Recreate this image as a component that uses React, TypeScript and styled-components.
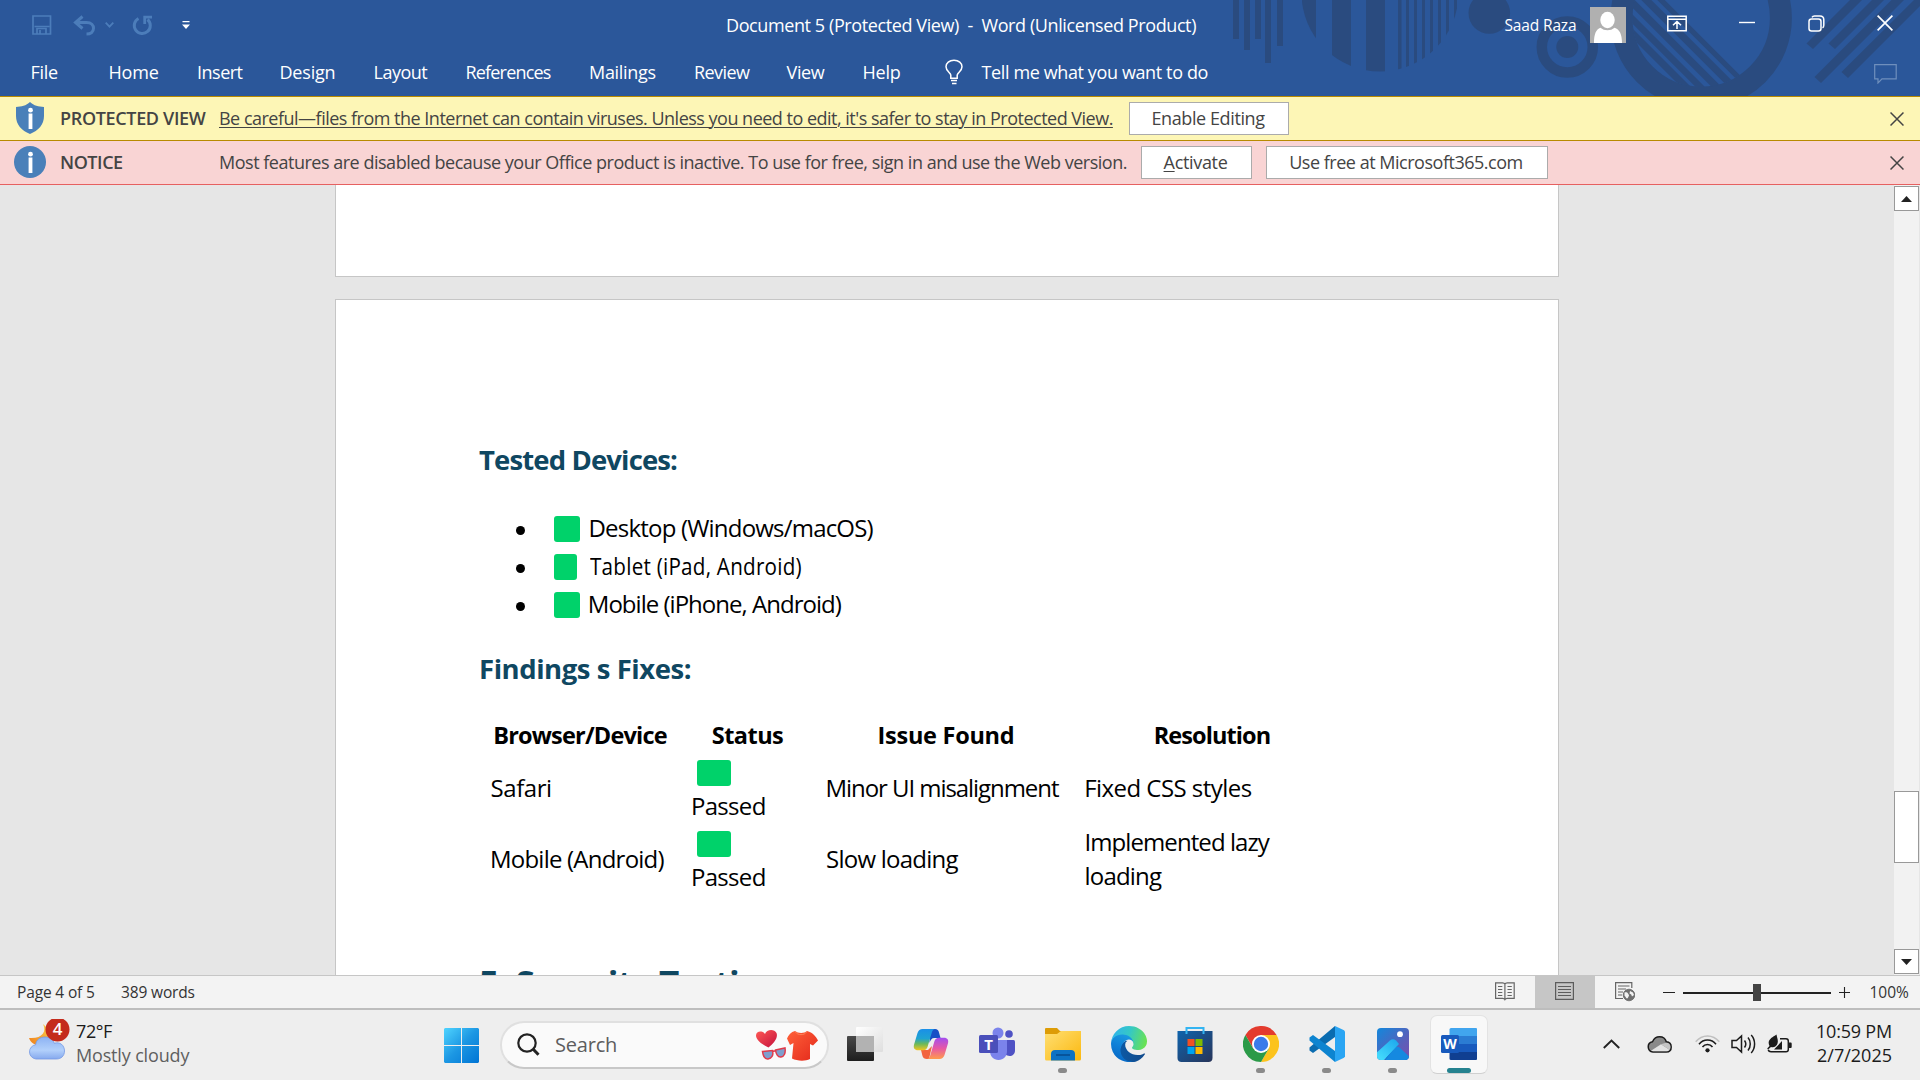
import React from "react";
import styled, { createGlobalStyle } from "styled-components";

const Reset = createGlobalStyle`
  * { box-sizing: border-box; }
  html, body { margin: 0; padding: 0; overflow: hidden; }
  body { font-family: "Open Sans", "Noto Sans", sans-serif; }
  svg { display: block; flex: none; }
`;

const Screen = styled.div`
  width: 1920px;
  height: 1080px;
  display: flex;
  flex-direction: column;
  overflow: hidden;
  background: #e6e6e6;
`;

const Text = styled.span<{ $size?: number; $track?: number; $weight?: number; $color?: string; $line?: number }>`
  flex: none;
  display: block;
  white-space: pre;
  font-size: ${(p) => p.$size ?? 18}px;
  font-weight: ${(p) => p.$weight ?? 400};
  letter-spacing: ${(p) => p.$track ?? 0}px;
  color: ${(p) => p.$color ?? "inherit"};
  line-height: ${(p) => p.$line ?? 24}px;
`;

/* ---------- Title bar and ribbon ---------- */

const Header = styled.header`
  position: relative;
  flex: none;
  height: 96px;
  background: #2b579a;
  color: #fff;
`;

const HeaderArt = styled.svg`
  position: absolute;
  top: 0;
  right: 0;
`;

const TitleRow = styled.div`
  position: relative;
  height: 50px;
  display: flex;
  align-items: center;
`;

const QuickAccess = styled.div`
  flex: none;
  width: 726px;
  height: 50px;
  padding-left: 32px;
  display: flex;
  align-items: center;
`;

const TitleSlot = styled.div`
  flex: none;
  width: 778.5px;
`;

const UserName = styled.div`
  flex: none;
  width: 85.5px;
`;

const WindowButton = styled.div<{ $width: number; $inset?: number }>`
  width: ${(p) => p.$width}px;
  flex: none;
  height: 50px;
  display: flex;
  justify-content: center;
  padding: 15px 0 0 ${(p) => p.$inset ?? 0}px;
`;

const TabRow = styled.nav`
  position: relative;
  height: 44px;
  padding-left: 30.5px;
  display: flex;
  align-items: center;
`;

const Tab = styled.div<{ $width: number }>`
  width: ${(p) => p.$width}px;
  flex: none;
`;

const CommentSlot = styled.div`
  margin-left: auto;
  padding: 3px 23px 0 0;
`;

/* ---------- Message bars ---------- */

const MessageBar = styled.div<{ $bg: string; $border: string; $top?: string }>`
  flex: none;
  height: ${(p) => (p.$top ? 45 : 44)}px;
  display: flex;
  align-items: center;
  padding: 0 16px 0 14px;
  color: #444;
  background: ${(p) => p.$bg};
  border-bottom: 1px solid ${(p) => p.$border};
  border-top: ${(p) => (p.$top ? `1px solid ${p.$top}` : "none")};
`;

const BarIcon = styled.div`
  width: 46px;
  padding-bottom: 1px;
`;

const BarTitle = styled.div`
  width: 159px;
  padding-bottom: 2px;
`;

const BarMessage = styled.div<{ $width: number; $underline?: boolean }>`
  width: ${(p) => p.$width}px;
  padding-bottom: 2px;
  text-decoration: ${(p) => (p.$underline ? "underline" : "none")};
  text-decoration-thickness: 1px;
  text-underline-offset: 2px;
`;

const BarButton = styled.button<{ $width: number; $gap?: number }>`
  flex: none;
  width: ${(p) => p.$width}px;
  height: 33px;
  margin: 0 ${(p) => p.$gap ?? 0}px 0 0;
  padding: 0 2px 2px 0;
  display: flex;
  align-items: center;
  justify-content: center;
  font-family: inherit;
  color: #444;
  background: #fff;
  border: 1px solid #ababab;
`;

const Accel = styled.span`
  text-decoration: underline;
  text-underline-offset: 2px;
  text-decoration-thickness: 1px;
`;

const Dismiss = styled.div`
  margin-left: auto;
`;

/* ---------- Document area ---------- */

const Workspace = styled.main`
  flex: none;
  height: 790px;
  display: flex;
  overflow: hidden;
  background: #e6e6e6;
`;

const Canvas = styled.div`
  width: 1894px;
  height: 790px;
  padding-left: 335px;
  overflow: hidden;
  display: flex;
  flex-direction: column;
  gap: 22px;
`;

const PreviousPage = styled.section`
  flex: none;
  width: 1224px;
  height: 92px;
  background: #fff;
  border: 1px solid #c6c6c6;
  border-top: none;
`;

const Page = styled.section`
  flex: none;
  width: 1224px;
  height: 900px;
  padding: 141px 0 0 143px;
  background: #fff;
  border: 1px solid #c6c6c6;
  color: #000;
`;

const Heading = styled.h2<{ $size?: number; $line?: number; $track: number; $top?: number }>`
  margin: ${(p) => p.$top ?? 0}px 0 0;
  white-space: pre;
  font-weight: 700;
  font-size: ${(p) => p.$size ?? 27.5}px;
  line-height: ${(p) => p.$line ?? 37}px;
  letter-spacing: ${(p) => p.$track}px;
  color: #0f4761;
`;

const List = styled.ul`
  list-style: none;
  margin: 31px 0 0;
  padding: 0 0 0 37px;
`;

const Item = styled.li`
  height: 38px;
  display: flex;
  align-items: flex-start;
`;

const Bullet = styled.i`
  width: 9px;
  height: 9px;
  margin: 17px 29px 0 0;
  border-radius: 50%;
  background: #000;
`;

const Check = styled.i<{ $width: number }>`
  display: block;
  flex: none;
  width: ${(p) => p.$width}px;
  height: 26px;
  border-radius: 3px;
  background: #00d26a;
`;

const ItemMark = styled.div<{ $width: number }>`
  width: ${(p) => p.$width}px;
  padding-top: 6.5px;
`;

const Condensed = styled.div`
  transform: scaleX(0.86);
  transform-origin: 0 0;
`;

const Table = styled.div`
  margin-top: 31px;
  display: grid;
  grid-template-columns: 202px 133px 264px 268px;
  grid-template-rows: 34px 71px 71px;
`;

const HeadCell = styled.div`
  display: flex;
  justify-content: center;
`;

const Cell = styled.div<{ $pad: number }>`
  padding-left: ${(p) => p.$pad}px;
  display: flex;
  flex-direction: column;
  justify-content: center;
`;

const StatusCell = styled.div`
  padding: 7.5px 0 0 10px;
  display: flex;
  flex-direction: column;
  gap: 2.5px;

  ${Check} {
    margin-left: 6px;
  }
`;

const ScrollBar = styled.div`
  width: 25px;
  height: 790px;
  padding: 1px 0;
  display: flex;
  flex-direction: column;
  background: #f2f2f2;
`;

const ScrollButton = styled.div`
  flex: none;
  width: 25px;
  height: 25px;
  display: flex;
  align-items: center;
  justify-content: center;
  background: #fff;
  border: 1px solid #999;
`;

const Thumb = styled.div`
  flex: none;
  width: 25px;
  height: 72px;
  margin: 580px 0 86px;
  background: #fff;
  border: 1px solid #999;
`;

/* ---------- Status bar ---------- */

const StatusBar = styled.footer`
  flex: none;
  height: 35px;
  display: flex;
  align-items: center;
  padding-left: 17px;
  color: #333;
  background: #f3f3f3;
  border-top: 1px solid #c6c6c6;
  border-bottom: 2px solid #bdbdbd;
`;

const StatusItem = styled.div<{ $width: number }>`
  width: ${(p) => p.$width}px;
`;

const ViewButton = styled.div<{ $active?: boolean }>`
  flex: none;
  width: 60px;
  height: 32px;
  display: flex;
  justify-content: center;
  padding: 6px 1px 0 0;
  background: ${(p) => (p.$active ? "#c6c6c6" : "transparent")};
`;

const Zoom = styled.div`
  margin-left: 8px;
  width: 206.5px;
`;

/* ---------- Taskbar ---------- */

const Taskbar = styled.div`
  flex: none;
  height: 70px;
  display: flex;
  align-items: center;
  background: #eee;
  color: #1b1b1b;
`;

const Weather = styled.div`
  width: 444px;
  height: 70px;
  padding-left: 28px;
  display: flex;
`;

const TwoLines = styled.div<{ $end?: boolean }>`
  padding-top: 9px;
  display: flex;
  flex-direction: column;
  align-items: ${(p) => (p.$end ? "flex-end" : "flex-start")};
  height: 70px;
`;

const SearchBox = styled.div`
  flex: none;
  width: 329px;
  height: 48px;
  margin: 0 3px 1px 20.5px;
  padding: 0 8px 0 15.5px;
  display: flex;
  align-items: center;
  background: #fafafa;
  border: 2px solid #e0e0e0;
  border-bottom-color: #c8c8c8;
  border-radius: 24px;
`;

const SearchText = styled.div`
  margin-left: 15px;
  width: 200px;
`;

const Slot = styled.div`
  flex: none;
  width: 66.05px;
  height: 70px;
  display: flex;
  justify-content: center;
`;

const AppTile = styled.div<{ $active?: boolean }>`
  width: 58px;
  height: 59px;
  margin-top: 5px;
  padding-top: 10px;
  display: flex;
  flex-direction: column;
  align-items: center;
  justify-content: space-between;
  border-radius: 7px;
  border: 1px solid ${(p) => (p.$active ? "#e3e3e3" : "transparent")};
  border-bottom-color: ${(p) => (p.$active ? "#d0d0d0" : "transparent")};
  background: ${(p) => (p.$active ? "#f8f8f8" : "transparent")};
`;

const Running = styled.i<{ $wide?: boolean; $on: boolean }>`
  width: ${(p) => (p.$wide ? 24 : 9)}px;
  height: 5px;
  border-radius: 3px;
  background: ${(p) => (!p.$on ? "transparent" : p.$wide ? "#25828f" : "#8a8a8a")};
`;

const Tray = styled.div`
  margin-left: auto;
  height: 70px;
  display: flex;
  align-items: center;
  padding-right: 28px;
`;

const TrayIcon = styled.div<{ $width: number }>`
  width: ${(p) => p.$width}px;
  padding-bottom: 2px;
  display: flex;
  justify-content: center;
`;

const Clock = styled.div`
  width: 88.5px;
`;

/* ---------- Drawings ---------- */

const Art = () => (
  <HeaderArt width="720" height="96" viewBox="1200 0 720 96" fill="#2a4b7f">
    <defs>
      <clipPath id="stripeDisc"><circle cx="1380" cy="-7" r="78.5" /></clipPath>
      <clipPath id="innerRing"><circle cx="1701.2" cy="18" r="69" /></clipPath>
    </defs>
    <path d="M1233 0h6v39h-6zM1244 0h6v50h-6zM1255 0h6v39h-6zM1265 0h6v63h-6zM1277 0h6v46h-6z" />
    <path
      clipPath="url(#stripeDisc)"
      d="M1302 0h14v96h-14zM1332 0h19v96h-19zM1366 0h19v96h-19zM1398 0h3.5v96h-3.5zM1406 0h3v96h-3zM1414 0h3v96h-3zM1422 0h3v96h-3zM1430 0h3v96h-3zM1438 0h3v96h-3zM1446 0h3v96h-3zM1454 0h3v96h-3z"
    />
    <circle cx="1489.3" cy="13" r="20.8" />
    <circle cx="1567.3" cy="47" r="25.5" fill="none" stroke="#2a4b7f" strokeWidth="10.5" />
    <circle cx="1567.3" cy="47" r="11" />
    <circle cx="1701.2" cy="18" r="79.7" fill="none" stroke="#2a4b7f" strokeWidth="22" />
    <g clipPath="url(#innerRing)">
      <path d="M1594 0h10l96 96h-10zM1608.7 0h9.3l96 96h-9.3zM1624.7 0h10l96 96h-10zM1641.3 0h10l96 96h-10zM1657.3 0h7.4l96 96h-7.4z" />
    </g>
    <path d="M1850 0h12l-49 49-6.500-5.500zM1872 0h12l-49 49-6.500-5.500zM1891.500 0h12.500l-83 83-6.500-6zM1914 0h6v6l-72 72-6.500-6z" />
  </HeaderArt>
);

const SaveIcon = () => (
  <svg width="20" height="20" viewBox="0 0 20 20" fill="none" stroke="#4c7dba" strokeWidth="1.7">
    <path d="M1 1h17.500v18H1zM2.500 11.500h15" />
    <path d="M5 19v-5.500h9V19M8 19v-4" />
  </svg>
);
const UndoIcon = () => (
  <svg width="23" height="21" viewBox="0 0 23 21" fill="none" stroke="#4c7dba" strokeWidth="3">
    <path d="M9.500 1.500 2.500 7.500l7 6M3 7.500h10.500c5 0 7 3 7 5.800 0 3.500-2.700 5.700-7 5.700" />
  </svg>
);
const SmallChevron = () => (
  <svg width="9" height="6" viewBox="0 0 9 6" fill="none" stroke="#4c7dba" strokeWidth="1.8"><path d="M.7.7 4.500 4.600 8.300.7" /></svg>
);
const RedoIcon = () => (
  <svg width="21" height="21" viewBox="0 0 21 21" fill="none" stroke="#4c7dba" strokeWidth="3">
    <path d="M6.500 3.500a8 8 0 1 0 9 1" /><path d="M20 2.200h-7.300V9" strokeWidth="2.800" />
  </svg>
);
const CustomizeIcon = () => (
  <svg width="8" height="8" viewBox="0 0 8 8" fill="#fff"><path d="M.5 0h7v1.300h-7zM0 3.500h8L4 8z" /></svg>
);
const Avatar = () => (
  <svg width="36" height="36" viewBox="0 0 36 36">
    <path fill="#b0b0b0" d="M0 0h36v36H0z" />
    <ellipse cx="17.500" cy="13" rx="7.200" ry="8.300" fill="#fff" />
    <path fill="#fff" d="M4 36c0-9 2-13.500 6.500-15.200 2 1.700 4.200 2.500 7 2.500s5-.8 7-2.500C29.500 22.500 32 27 32 36z" />
  </svg>
);
const RibbonIcon = () => (
  <svg width="20" height="17" viewBox="0 0 20 17" fill="none" stroke="#fff" strokeWidth="1.500">
    <path d="M.8 1.300h18.400v14.500H.8zM.8 4.300h18.400M10 14V6.800M6 10.300l4-3.800 4 3.800" />
  </svg>
);
const MinimizeIcon = () => (
  <svg width="16" height="17" viewBox="0 0 16 17" stroke="#fff" strokeWidth="1.400"><path d="M0 7.500h16" /></svg>
);
const RestoreIcon = () => (
  <svg width="17" height="18" viewBox="0 0 17 18" fill="none" stroke="#fff" strokeWidth="1.500">
    <rect x="1" y="4" width="12" height="12" rx="2.500" />
    <path d="M4 2.300C4.500 1.400 5.300 1 6.500 1H12c2.500 0 3.800 1.500 3.800 3.800v5.500c0 1.200-.4 2-1.300 2.500" />
  </svg>
);
const Cross = ({ size, color }: { size: number; color: string }) => (
  <svg width={size} height={size} viewBox="0 0 16 16" stroke={color} strokeWidth="1.700"><path d="m.6.6 14.800 14.800M15.400.6.6 15.400" /></svg>
);
const BulbIcon = () => (
  <svg width="18" height="26" viewBox="0 0 18 26" fill="none" stroke="#fff" strokeWidth="1.500">
    <path d="M5.800 19.300v-3.100C5.500 13.600 1 12.300 1 7.800 1 4 4.300 1.200 9 1.200S17 4 17 7.800c0 4.500-4.500 5.800-4.800 8.400v3.100zM6 21.500h6M7 24.400h4.500" />
  </svg>
);
const CommentIcon = () => (
  <svg width="23" height="20" viewBox="0 0 23 20" fill="none" stroke="#6f8fbd" strokeWidth="1.200">
    <path d="M.7.700h21.500v14.200H8L4 19v-4.100H.7z" />
  </svg>
);
const InfoGlyph = () => (
  <g fill="#fff"><circle cx="16.500" cy="8.200" r="2.400" /><path d="M14.600 11.500h3.800v15.500h-3.800z" /></g>
);
const ShieldIcon = () => (
  <svg width="32" height="32" viewBox="0 0 32 32">
    <path fill="#4a80b9" d="M16 0c4 3.700 8.500 4.700 14 5v9c0 8.500-5.500 14.500-14 18C7.500 28.500 2 22.500 2 14V5c5.500-.3 10-1.300 14-5z" />
    <InfoGlyph />
  </svg>
);
const InfoIcon = () => (
  <svg width="32" height="32" viewBox="0 0 32 32"><circle cx="16" cy="16" r="16" fill="#4a80b9" /><InfoGlyph /></svg>
);
const Arrow = ({ up }: { up?: boolean }) => (
  <svg width="11" height="6" viewBox="0 0 11 6" fill="#222"><path d={up ? "M0 6h11L5.500 0z" : "M0 0h11L5.500 6z"} /></svg>
);

const ReadIcon = () => (
  <svg width="20" height="19" viewBox="0 0 20 19" fill="none" stroke="#666" strokeWidth="1.200">
    <path d="M.6.800h7c1.400 0 2 .5 2.300 1.200.3-.7.900-1.200 2.300-1.200h7v15.500h-7c-1.400 0-2 .5-2.300 1.200-.3-.7-.9-1.200-2.300-1.200h-7zM9.900 2v16M3 4.500h4.300M3 7.500h4.300M3 10.500h4.300M3 13.500h4.300M12.500 4.500h4.300M12.500 7.500h4.300M12.500 10.500h4.300M12.500 13.500h4.300" />
  </svg>
);
const PrintIcon = () => (
  <svg width="19" height="18" viewBox="0 0 19 18" fill="none" stroke="#5c5c5c" strokeWidth="1.200">
    <path d="M.6.600h17.800v16.800H.6zM3 4.500h13M3 7.500h13M3 10.500h13M3 13.500h13" />
  </svg>
);
const WebIcon = () => (
  <svg width="20" height="20" viewBox="0 0 20 20" fill="none" stroke="#666" strokeWidth="1.200">
    <path d="M8 16.500H.6V.600h16.200V6M3 4h11.500M3 7h8M3 10h5M3 13h4" />
    <circle cx="14" cy="13" r="5.800" fill="#707070" stroke="#666" strokeWidth=".8" />
    <path fill="#f3f3f3" stroke="none" d="M9.500 10.500c1.500-.7 3-.2 3.500 1s1.500 1 .8 2.500-1 2.500-1.800 2.500-1.300-2-2.500-2.800zM15 9l3 1.500 1 2.500-2 1.500-.8-2-1.700-1z" />
  </svg>
);
const ZoomSlider = () => (
  <svg width="190" height="19" viewBox="0 0 190 19" stroke="#222">
    <path d="M0 9.500h12M176 9.500h11M181.500 4v11" strokeWidth="1.100" />
    <path d="M20 10h148" strokeWidth="2" />
    <path d="M90 1h8v17h-8z" fill="#444" stroke="none" />
  </svg>
);

const WeatherIcon = () => (
  <svg width="48" height="48" viewBox="0 0 48 48">
    <defs>
      <linearGradient id="moon" x1="1" y1="0" x2="0" y2="1"><stop offset="0" stopColor="#fcd34c" /><stop offset="1" stopColor="#ef7d1a" /></linearGradient>
      <linearGradient id="cloud" x1="0" y1="0" x2="0" y2="1"><stop offset="0" stopColor="#8cb2f3" /><stop offset=".6" stopColor="#b2d0fb" /><stop offset="1" stopColor="#86a9ee" /></linearGradient>
    </defs>
    <path fill="url(#moon)" d="M15 5c4 8-1 15-14 14 2 6 8 8 13 7 8-1 12-12 1-21z" />
    <path fill="url(#cloud)" stroke="#7398e4" strokeWidth=".8" d="M8 40a7.200 7.200 0 0 1-.3-14.300C8 21 12 18 17 18c4.500 0 8 2.500 9.300 6.300 5.500-2 10.200 2 10.200 7.700 0 5-3.500 8-8 8z" />
    <circle cx="29.500" cy="10.500" r="12" fill="#c42b1c" />
    <text x="29.500" y="16.300" fontSize="17" fontWeight="600" textAnchor="middle" fill="#fff" fontFamily="Open Sans, sans-serif">4</text>
  </svg>
);
const StartIcon = () => (
  <svg width="35" height="35" viewBox="0 0 35 35">
    <defs><linearGradient id="win" x1="0" y1="0" x2="1" y2="1"><stop offset="0" stopColor="#4fd4ff" /><stop offset=".5" stopColor="#1c97e3" /><stop offset="1" stopColor="#0074d4" /></linearGradient></defs>
    <path fill="url(#win)" d="M1 0h16v17H0V1zM18 0h16l1 1v16H18zM0 18h17v17H1l-1-1zM18 18h17v16l-1 1H18z" />
  </svg>
);
const SearchIcon = () => (
  <svg width="23" height="23" viewBox="0 0 23 23" fill="none" stroke="#222" strokeWidth="2.200">
    <circle cx="10" cy="10" r="8.700" /><path d="m16 16 5.500 5.800" strokeWidth="3" />
  </svg>
);
const Highlights = () => (
  <svg width="64" height="32" viewBox="0 0 64 32">
    <defs>
      <linearGradient id="heart" x1="0" y1="0" x2="1" y2="1"><stop offset="0" stopColor="#ff5a55" /><stop offset="1" stopColor="#c5103c" /></linearGradient>
      <linearGradient id="shirt" x1="0" y1="0" x2="1" y2="1"><stop offset="0" stopColor="#ff6139" /><stop offset="1" stopColor="#e3281b" /></linearGradient>
    </defs>
    <path fill="url(#heart)" d="M13.500 18.500C7 15.500 1 11 1 6.500 1 1.800 7.500 1 10 5c1.500-5 9.500-5.500 11.500-1 2 5-3.500 11-8 14.500z" />
    <path fill="#7f9fce" stroke="#e03b4b" strokeWidth="1.500" d="M7.500 22.500 17.500 21.500c1.300 5-1 8-4.500 8.500s-5-3.500-5.500-7.500zM20.500 21l9.500-2c.8 5-.8 8.500-4 9s-5-3-5.500-7zM17.500 22.500l3-.8" />
    <path fill="url(#shirt)" d="M40 2c3 2.500 9.500 2.500 12 0 6 1.500 8.500 5 11 9.500l-5 5-3-1.500v15c-5 2.500-13 2-18-.5l1.500-15.500L35 16l-3-6.500C33.500 6 36 3 40 2z" />
    <path fill="none" stroke="#ff8154" strokeWidth="1" d="M40.500 3c2 3.500 9 3.500 11 0" />
  </svg>
);
const TaskViewIcon = () => (
  <svg width="36" height="36" viewBox="0 0 36 36">
    <defs>
      <linearGradient id="tvDark" x1="0" y1="0" x2="0" y2="1"><stop offset="0" stopColor="#494949" /><stop offset="1" stopColor="#1e1e1e" /></linearGradient>
      <linearGradient id="tvLight" x1="0" y1="0" x2="1" y2="1"><stop offset="0" stopColor="#fff" /><stop offset="1" stopColor="#dedede" /></linearGradient>
    </defs>
    <rect y="10" width="27" height="25" rx="1" fill="url(#tvDark)" />
    <rect x="9" y="1" width="27" height="25" rx="1" fill="url(#tvLight)" />
    <path d="M9 10h18v16H9z" fill="#b2b2b2" />
  </svg>
);
const CopilotIcon = () => (
  <svg width="36" height="36" viewBox="0 0 36 36">
    <defs>
      <linearGradient id="cpA" x1="0" y1="0" x2="0" y2="1"><stop offset="0" stopColor="#1a8fe8" /><stop offset=".45" stopColor="#1fa3d1" /><stop offset=".7" stopColor="#6cb95a" /><stop offset="1" stopColor="#f4c61f" /></linearGradient>
      <linearGradient id="cpB" x1="0" y1="0" x2="0" y2="1"><stop offset="0" stopColor="#a24df0" /><stop offset=".5" stopColor="#e758a5" /><stop offset="1" stopColor="#ff9b4b" /></linearGradient>
    </defs>
    <path fill="#174fc6" d="M17 3h5c2.500 0 3.500 1.500 4 3.500l1.500 5.500h-6c-3 0-4 2-5 5z" />
    <path fill="#f2643f" d="M8 24h7l4-4-3 13h-2c-2.500 0-4-1-4.500-3z" />
    <path fill="url(#cpA)" d="M9.500 3H22c-2 .5-2.800 2-3.500 4.500l-4 13.500c-.7 2-2 3.300-4.500 3.300H5c-3.500 0-4.800-2.300-4-5.500L4.500 7C5.500 4.500 7 3 9.500 3z" />
    <path fill="url(#cpB)" d="M26.500 33H14c2-.5 2.800-2 3.500-4.500l4-13.500c.7-2 2-3.300 4.500-3.300h5c3.500 0 4.800 2.300 4 5.500L31.500 29c-1 2.500-2.500 4-5 4z" />
  </svg>
);
const TeamsIcon = () => (
  <svg width="36" height="36" viewBox="0 0 36 36">
    <circle cx="30" cy="8" r="3.800" fill="#4f52c4" />
    <path fill="#4f52c4" d="M24 14h10.500a1.500 1.500 0 0 1 1.500 1.500v9c0 3.500-2.500 5.500-5.500 5.500S24 27 24 24z" />
    <circle cx="19" cy="7" r="5.500" fill="#7b83eb" />
    <path fill="#7b83eb" d="M11 14h17v11c0 5.500-3.500 9-8.500 9S11 30.500 11 25z" />
    <rect y="9" width="19" height="18" rx="1.500" fill="#4a4fba" />
    <text x="9.500" y="23.500" fontSize="15" fontWeight="700" textAnchor="middle" fill="#fff" fontFamily="Open Sans, sans-serif">T</text>
  </svg>
);
const ExplorerIcon = () => (
  <svg width="36" height="36" viewBox="0 0 36 36">
    <defs><linearGradient id="fold" x1="0" y1="0" x2="1" y2="1"><stop offset="0" stopColor="#ffdf73" /><stop offset="1" stopColor="#fbb80f" /></linearGradient></defs>
    <path fill="#dd9c06" d="M0 3a1 1 0 0 1 1-1h11l3 3h20a1 1 0 0 1 1 1v6H0z" />
    <path fill="url(#fold)" d="M0 8h12l4-3h20v28a1.500 1.500 0 0 1-1.500 1.500h-33A1.500 1.500 0 0 1 0 33z" />
    <path fill="#0c72c4" d="M6 34.500V28c0-2.500 1.500-4 4-4h16c2.500 0 4 1.500 4 4v6.500z" />
    <path stroke="#07549b" strokeWidth="2" d="M11 29h14" />
  </svg>
);
const EdgeIcon = () => (
  <svg width="36" height="36" viewBox="0 0 256 256">
    <defs>
      <linearGradient id="eA" x1="0" y1="0" x2="1" y2="0"><stop offset="0" stopColor="#0c59a4" /><stop offset="1" stopColor="#114a8b" /></linearGradient>
      <linearGradient id="eB" x1=".6" y1="0" x2=".3" y2="1"><stop offset="0" stopColor="#1b9de2" /><stop offset=".5" stopColor="#0f7fd7" /><stop offset="1" stopColor="#0667c4" /></linearGradient>
      <linearGradient id="eC" x1="0" y1=".3" x2="1" y2=".5"><stop offset="0" stopColor="#2fb3ee" /><stop offset=".5" stopColor="#35c8c5" /><stop offset="1" stopColor="#69e253" /></linearGradient>
    </defs>
    <path fill="url(#eA)" d="M235.680 195.450a94.170 94.170 0 0 1-10.540 4.710 101.870 101.870 0 0 1-35.900 6.460c-47.320 0-88.540-32.550-88.540-74.320a31.480 31.480 0 0 1 16.430-27.320c-42.800 1.800-53.800 46.400-53.800 72.530 0 73.880 68.090 81.370 82.760 81.370 7.910 0 19.840-2.300 27-4.560l1.310-.44a128.340 128.340 0 0 0 66.600-52.800 4 4 0 0 0-5.320-5.630z" />
    <path fill="url(#eB)" d="M105.730 241.420a79.200 79.200 0 0 1-22.740-21.340 80.720 80.720 0 0 1 29.540-120c3.130-1.470 8.470-4.130 15.570-4a32.370 32.370 0 0 1 25.690 13 31.880 31.880 0 0 1 6.350 18.660c0-.21 24.460-79.600-80-79.600-43.900 0-80 41.660-80 78.210a130.150 130.150 0 0 0 12.110 56 128 128 0 0 0 156.370 67.050 75.550 75.550 0 0 1-62.780-8z" />
    <path fill="url(#eC)" d="M152.330 148.860c-.81 1.050-3.300 2.500-3.300 5.660 0 2.610 1.700 5.120 4.720 7.230 14.380 10 41.490 8.680 41.560 8.680a59.560 59.560 0 0 0 30.270-8.350 61.380 61.380 0 0 0 30.430-52.880c.26-22.410-8-37.310-11.340-43.910C223.460 23.840 177.720 0 128 0A128 128 0 0 0 0 126.200c.48-36.540 36.800-66.050 80-66.050 3.500 0 23.460.34 42 10.070 16.340 8.580 24.900 18.940 30.850 29.210 6.180 10.670 7.280 24.150 7.280 29.520 0 5.370-2.740 13.330-7.800 19.910z" />
  </svg>
);
const StoreIcon = () => (
  <svg width="36" height="36" viewBox="0 0 36 36">
    <defs><linearGradient id="store" x1="0" y1="0" x2="1" y2="1"><stop offset="0" stopColor="#0f64ad" /><stop offset="1" stopColor="#283459" /></linearGradient></defs>
    <path fill="url(#store)" d="M.5 5h35v27c0 2.500-1.500 4-4 4h-27c-2.500 0-4-1.500-4-4z" />
    <path fill="none" stroke="#33b4f2" strokeWidth="2" d="M9.500 8V2h17v6" />
    <path fill="#f25022" d="M10.500 13h7v7h-7z" /><path fill="#7fba00" d="M18.500 13h7v7h-7z" />
    <path fill="#00a4ef" d="M10.500 21h7v7h-7z" /><path fill="#ffb900" d="M18.500 21h7v7h-7z" />
  </svg>
);
const ChromeIcon = () => (
  <svg width="36" height="36" viewBox="0 0 48 48">
    <path fill="#e33b2e" d="M24 12h20.800A24 24 0 0 0 3.200 12l10.400 18z" />
    <path fill="#fcc31d" d="M24 48A24 24 0 0 0 44.800 12H24l10.400 18z" />
    <path fill="#2b9a48" d="M13.600 30 3.200 12A24 24 0 0 0 24 48l10.400-18z" />
    <circle cx="24" cy="24" r="12" fill="#fff" /><circle cx="24" cy="24" r="9.600" fill="#3a7bea" />
  </svg>
);
const CodeIcon = () => (
  <svg width="36" height="36" viewBox="0 0 36 36">
    <path fill="#0a6cb0" d="M26 0v11L4 27l-3.500-2.500v-3z" />
    <path fill="#0d84d0" d="M.5 11.500 4 9l22 16v11L.5 14.500z" />
    <path fill="#2aa5f3" d="m26 0 9 4.200 1 1.300v25l-1 1.300L26 36z" />
  </svg>
);
const PhotosIcon = () => (
  <svg width="36" height="36" viewBox="0 0 36 36">
    <defs>
      <linearGradient id="phBg" x1="0" y1="0" x2="1" y2="1"><stop offset="0" stopColor="#1288dc" /><stop offset=".6" stopColor="#5661bb" /><stop offset="1" stopColor="#7a4fae" /></linearGradient>
      <linearGradient id="phFg" x1="0" y1="1" x2="1" y2="0"><stop offset="0" stopColor="#4ae3ff" /><stop offset="1" stopColor="#1ba5ec" /></linearGradient>
      <clipPath id="phClip"><rect x="2" y="2" width="32" height="32" rx="4" /></clipPath>
    </defs>
    <g clipPath="url(#phClip)">
      <path fill="url(#phBg)" d="M2 2h32v32H2z" />
      <path fill="#0a62c4" d="m18 16 14 18H10z" />
      <path fill="#1589e0" d="m10 34 10-12c1.500-1.700 3.500-1.700 5 0l11 10v4H10z" />
      <path fill="url(#phFg)" d="M0 28 15 14.500c2-1.700 4-1.700 6 0l3 3.500L9 34H0z" />
    </g>
    <circle cx="25" cy="8.200" r="2.900" fill="#fff" />
  </svg>
);
const WordIcon = () => (
  <svg width="36" height="36" viewBox="0 0 36 36">
    <path fill="#41a5ee" d="M10 2h25a1 1 0 0 1 1 1v7H8.500V3.500A1.500 1.500 0 0 1 10 2z" />
    <path fill="#2b7cd3" d="M8.500 10H36v8H8.500z" /><path fill="#185abd" d="M8.500 18H36v8H8.500z" />
    <path fill="#103f91" d="M8.500 26H36v7a1 1 0 0 1-1 1H10a1.500 1.500 0 0 1-1.500-1.500z" />
    <rect y="9" width="18" height="18" rx="1.500" fill="#185abd" />
    <text x="9" y="23" fontSize="14" fontWeight="700" textAnchor="middle" fill="#fff" fontFamily="Open Sans, sans-serif">W</text>
  </svg>
);

const ChevronUp = () => (
  <svg width="17" height="10" viewBox="0 0 17 10" fill="none" stroke="#222" strokeWidth="1.900"><path d="m.8 9 7.700-7.500L16.200 9" /></svg>
);
const CloudIcon = () => (
  <svg width="25" height="17" viewBox="0 0 25 17">
    <path fill="#8a8a8a" stroke="#1b1b1b" strokeWidth="1.500" d="M6 16a5.200 5.200 0 0 1-.5-10.300C7 2.500 9.500.8 12.500.8c3.500 0 6 2 6.800 5C22.500 6 24.200 8 24.200 11c0 3-2 5-5 5z" />
    <path fill="#e3e3e3" d="m4 14.800 10-6.500 8.500 5.500c-.8 1-1.900 1.500-3.300 1.500H6c-.7 0-1.400-.2-2-.5z" />
    <path fill="#c5c5c5" d="m14 8.300 5-1.500c3 0 4.500 2 4.400 4.300 0 1.200-.3 2-.9 2.700z" />
  </svg>
);
const WifiIcon = () => (
  <svg width="25" height="18" viewBox="0 0 25 18" fill="none" strokeWidth="1.500">
    <path stroke="#c0c0c0" d="M.7 6.800C7-1 18-1 24.300 6.800" />
    <path stroke="#1b1b1b" d="M4 9.200c4.500-5.500 12.500-5.500 17 0M7.500 12c2.500-3.500 7.500-3.500 10 0" />
    <circle cx="12.500" cy="15.300" r="2.100" fill="#1b1b1b" />
  </svg>
);
const SpeakerIcon = () => (
  <svg width="25" height="20" viewBox="0 0 25 20" fill="none" stroke="#1b1b1b" strokeWidth="1.500">
    <path d="M1 6.500h4.500l5-4.500v16l-5-4.500H1zM13.500 6.500c1.500 2 1.500 5 0 7M17 3.500c3 3.500 3 9.500 0 13M20.200 1c4.500 5 4.500 13 0 18" />
  </svg>
);
const BatteryIcon = () => (
  <svg width="25" height="20" viewBox="0 0 25 20">
    <path fill="none" stroke="#1b1b1b" strokeWidth="1.500" d="M13 4.800h6c1.500 0 2.300.8 2.300 2.300v8.300c0 1.500-.8 2.300-2.300 2.300H4c-1.500 0-2.500-.8-2.800-2" />
    <path fill="#1b1b1b" d="M22 8.500h1.500c.8 0 1.200.5 1.200 1.200v3c0 .8-.4 1.300-1.200 1.300H22zM15 7v8.500H7zM9.500.5C10 4 11.500 6 10.500 9.500c-.8 3-4 4.500-6.500 3.500L1 15.500l-.8-1L2.500 12C-.5 6 5 3.500 9.500.5z" />
  </svg>
);

/* ---------- Content ---------- */

const tabs = [
  { label: "File", width: 78, track: -0.3 },
  { label: "Home", width: 88.5, track: -0.15 },
  { label: "Insert", width: 82.5, track: -0.5 },
  { label: "Design", width: 94, track: -0.2 },
  { label: "Layout", width: 92, track: -0.5 },
  { label: "References", width: 123.500, track: -0.82 },
  { label: "Mailings", width: 105, track: -0.3 },
  { label: "Review", width: 92.5, track: -0.58 },
  { label: "View", width: 76, track: -0.35 },
  { label: "Help", width: 82, track: -0.2 },
];

const apps = [
  { name: "taskview", icon: <TaskViewIcon />, running: false },
  { name: "copilot", icon: <CopilotIcon />, running: false },
  { name: "teams", icon: <TeamsIcon />, running: false },
  { name: "explorer", icon: <ExplorerIcon />, running: true },
  { name: "edge", icon: <EdgeIcon />, running: false },
  { name: "store", icon: <StoreIcon />, running: false },
  { name: "chrome", icon: <ChromeIcon />, running: true },
  { name: "code", icon: <CodeIcon />, running: true },
  { name: "photos", icon: <PhotosIcon />, running: true },
  { name: "word", icon: <WordIcon />, running: true, active: true },
];

const Gap = styled.span<{ $w: number }>`
  flex: none;
  width: ${(p) => p.$w}px;
`;

const BodyText = ({ track, line = 34, children }: { track: number; line?: number; children: string }) => (
  <Text $size={24} $track={track} $line={line}>{children}</Text>
);

export default function App() {
  return (
    <Screen>
      <Reset />
      <Header>
        <Art />
        <TitleRow>
          <QuickAccess>
            <SaveIcon /><Gap $w={21} /><UndoIcon /><Gap $w={9} /><SmallChevron /><Gap $w={17.5} /><RedoIcon /><Gap $w={29} /><CustomizeIcon />
          </QuickAccess>
          <TitleSlot>
            <Text $track={-0.4}>{"Document 5 (Protected View)\u00a0 -\u00a0 Word (Unlicensed Product)"}</Text>
          </TitleSlot>
          <UserName><Text $size={15.5} $track={-0.15}>Saad Raza</Text></UserName>
          <Avatar />
          <Gap $w={20} />
          <WindowButton $width={62}><RibbonIcon /></WindowButton>
          <WindowButton $width={78}><MinimizeIcon /></WindowButton>
          <WindowButton $width={60}><RestoreIcon /></WindowButton>
          <WindowButton $width={74} $inset={4}><Cross size={16} color="#fff" /></WindowButton>
        </TitleRow>
        <TabRow>
          {tabs.map((t) => (
            <Tab key={t.label} $width={t.width}><Text $track={t.track}>{t.label}</Text></Tab>
          ))}
          <BulbIcon />
          <Gap $w={19} />
          <Text $track={-0.38}>Tell me what you want to do</Text>
          <CommentSlot><CommentIcon /></CommentSlot>
        </TabRow>
      </Header>

      <MessageBar $bg="#fdf6b6" $border="#b88a00" $top="#b88a00">
        <BarIcon><ShieldIcon /></BarIcon>
        <BarTitle><Text $weight={600} $track={-0.34}>PROTECTED VIEW</Text></BarTitle>
        <BarMessage $width={910} $underline>
          <Text $track={-0.505}>Be careful—files from the Internet can contain viruses. Unless you need to edit, it's safer to stay in Protected View.</Text>
        </BarMessage>
        <BarButton $width={160}><Text $track={-0.4}>Enable Editing</Text></BarButton>
        <Dismiss><Cross size={14} color="#444" /></Dismiss>
      </MessageBar>
      <MessageBar $bg="#f9d4d4" $border="#e66060">
        <BarIcon><InfoIcon /></BarIcon>
        <BarTitle><Text $weight={600} $track={-0.45}>NOTICE</Text></BarTitle>
        <BarMessage $width={922}>
          <Text $track={-0.485}>Most features are disabled because your Office product is inactive. To use for free, sign in and use the Web version.</Text>
        </BarMessage>
        <BarButton $width={111} $gap={14}><Text $track={-0.33}><Accel>A</Accel>ctivate</Text></BarButton>
        <BarButton $width={282}><Text $track={-0.48}>Use free at Microsoft365.com</Text></BarButton>
        <Dismiss><Cross size={14} color="#444" /></Dismiss>
      </MessageBar>

      <Workspace>
        <Canvas>
          <PreviousPage />
          <Page>
            <Heading $track={-0.87}>Tested Devices:</Heading>
            <List>
              <Item>
                <Bullet /><ItemMark $width={34.5}><Check $width={26} /></ItemMark>
                <BodyText track={-0.8} line={37}>Desktop (Windows/macOS)</BodyText>
              </Item>
              <Item>
                <Bullet /><ItemMark $width={36}><Check $width={22.5} /></ItemMark>
                <Condensed><BodyText track={0.28} line={37}>Tablet (iPad, Android)</BodyText></Condensed>
              </Item>
              <Item>
                <Bullet /><ItemMark $width={33.8}><Check $width={26} /></ItemMark>
                <BodyText track={-0.98} line={37}>Mobile (iPhone, Android)</BodyText>
              </Item>
            </List>
            <Heading $track={-0.45} $top={27}>Findings s Fixes:</Heading>
            <Table>
              <HeadCell><Text $size={23.5} $weight={700} $line={34} $track={-0.8}>Browser/Device</Text></HeadCell>
              <HeadCell><Text $size={23.5} $weight={700} $line={34} $track={-0.55}>Status</Text></HeadCell>
              <HeadCell><Text $size={23.5} $weight={700} $line={34} $track={-0.27}>Issue Found</Text></HeadCell>
              <HeadCell><Text $size={23.5} $weight={700} $line={34} $track={-0.9}>Resolution</Text></HeadCell>

              <Cell $pad={11.5}><BodyText track={-0.42}>Safari</BodyText></Cell>
              <StatusCell><Check $width={34} /><BodyText track={-0.7} line={35}>Passed</BodyText></StatusCell>
              <Cell $pad={11.5}><BodyText track={-1.06}>Minor UI misalignment</BodyText></Cell>
              <Cell $pad={6.2}><BodyText track={-0.54}>Fixed CSS styles</BodyText></Cell>

              <Cell $pad={11}><BodyText track={-0.78}>Mobile (Android)</BodyText></Cell>
              <StatusCell><Check $width={34} /><BodyText track={-0.7} line={35}>Passed</BodyText></StatusCell>
              <Cell $pad={12}><BodyText track={-0.76}>Slow loading</BodyText></Cell>
              <Cell $pad={6.5}>
                <BodyText track={-0.92}>Implemented lazy</BodyText>
                <BodyText track={-0.8}>loading</BodyText>
              </Cell>
            </Table>
            <Heading $size={35} $line={47} $track={-0.9} $top={66}>5. Security Testing</Heading>
          </Page>
        </Canvas>
        <ScrollBar>
          <ScrollButton><Arrow up /></ScrollButton>
          <Thumb />
          <ScrollButton><Arrow /></ScrollButton>
        </ScrollBar>
      </Workspace>

      <StatusBar>
        <StatusItem $width={104}><Text $size={15.5} $track={-0.15}>Page 4 of 5</Text></StatusItem>
        <StatusItem $width={1354}><Text $size={15.5} $track={-0.15}>389 words</Text></StatusItem>
        <ViewButton><ReadIcon /></ViewButton>
        <ViewButton $active><PrintIcon /></ViewButton>
        <ViewButton><WebIcon /></ViewButton>
        <Zoom><ZoomSlider /></Zoom>
        <Text $size={15.5}>100%</Text>
      </StatusBar>

      <Taskbar>
        <Weather>
          <TwoLines><WeatherIcon /></TwoLines>
          <TwoLines>
            <Text $track={-0.4}>72°F</Text>
            <Text $track={-0.16} $color="#5f5f5f">Mostly cloudy</Text>
          </TwoLines>
        </Weather>
        <StartIcon />
        <SearchBox>
          <SearchIcon />
          <SearchText><Text $size={20} $track={-0.2} $color="#5d5d5d">Search</Text></SearchText>
          <Highlights />
        </SearchBox>
        {apps.map((a) => (
          <Slot key={a.name}>
            <AppTile $active={a.active}>
              {a.icon}
              <Running $on={a.running} $wide={a.active} />
            </AppTile>
          </Slot>
        ))}
        <Tray>
          <TrayIcon $width={48}><ChevronUp /></TrayIcon>
          <TrayIcon $width={48}><CloudIcon /></TrayIcon>
          <TrayIcon $width={48}><WifiIcon /></TrayIcon>
          <TrayIcon $width={24}><SpeakerIcon /></TrayIcon>
          <TrayIcon $width={48}><BatteryIcon /></TrayIcon>
          <Clock>
            <TwoLines $end>
              <Text $track={-0.2}>10:59 PM</Text>
              <Text>2/7/2025</Text>
            </TwoLines>
          </Clock>
        </Tray>
      </Taskbar>
    </Screen>
  );
}
